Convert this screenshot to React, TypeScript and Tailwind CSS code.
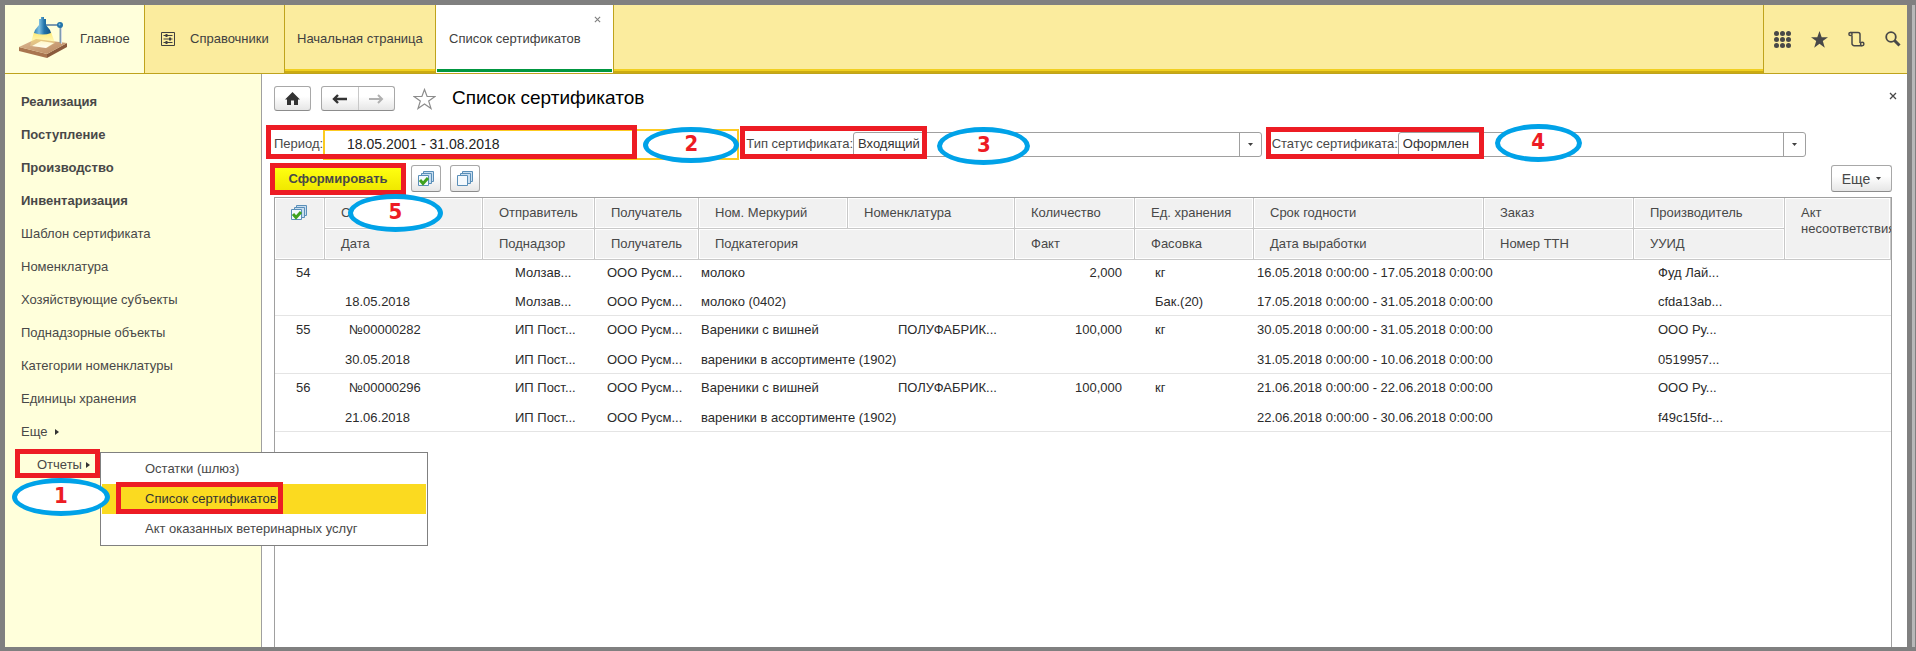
import type { ReactNode } from "react";

type Line = { no?: string; doc?: string; sender: string; receiver: string; item: string; goods?: string; qty?: string; unit?: string; dates: string; maker: string };

const sections = ["Реализация", "Поступление", "Производство", "Инвентаризация"];

const links = [
  "Шаблон сертификата",
  "Номенклатура",
  "Хозяйствующие субъекты",
  "Поднадзорные объекты",
  "Категории номенклатуры",
  "Единицы хранения",
];

const records: [Line, Line][] = [
  [
    { no: "54", sender: "Молзав...", receiver: "ООО Русм...", item: "молоко", qty: "2,000", unit: "кг", dates: "16.05.2018 0:00:00 - 17.05.2018 0:00:00", maker: "Фуд Лай..." },
    { doc: "18.05.2018", sender: "Молзав...", receiver: "ООО Русм...", item: "молоко (0402)", unit: "Бак.(20)", dates: "17.05.2018 0:00:00 - 31.05.2018 0:00:00", maker: "cfda13ab..." },
  ],
  [
    { no: "55", doc: "№00000282", sender: "ИП Пост...", receiver: "ООО Русм...", item: "Вареники с вишней", goods: "ПОЛУФАБРИК...", qty: "100,000", unit: "кг", dates: "30.05.2018 0:00:00 - 31.05.2018 0:00:00", maker: "ООО Ру..." },
    { doc: "30.05.2018", sender: "ИП Пост...", receiver: "ООО Русм...", item: "вареники в ассортименте (1902)", dates: "31.05.2018 0:00:00 - 10.06.2018 0:00:00", maker: "0519957..." },
  ],
  [
    { no: "56", doc: "№00000296", sender: "ИП Пост...", receiver: "ООО Русм...", item: "Вареники с вишней", goods: "ПОЛУФАБРИК...", qty: "100,000", unit: "кг", dates: "21.06.2018 0:00:00 - 22.06.2018 0:00:00", maker: "ООО Ру..." },
    { doc: "21.06.2018", sender: "ИП Пост...", receiver: "ООО Русм...", item: "вареники в ассортименте (1902)", dates: "22.06.2018 0:00:00 - 30.06.2018 0:00:00", maker: "f49c15fd-..." },
  ],
];

/* Red frame drawn over a control */
function Frame({ className }: { className: string }) {
  return <span className={`pointer-events-none absolute z-20 border-[5px] border-[#ed1c24] ${className}`} />;
}

/* Numbered step bubble */
function Step({ n, className }: { n: number; className: string }) {
  return (
    <span
      className={`pointer-events-none absolute z-30 flex items-center justify-center rounded-[50%] border-[5px] border-[#00a2e8] bg-white pb-0.5 font-['DejaVu_Sans_Condensed','DejaVu_Sans',sans-serif] text-[22px] leading-none font-bold text-[#ed1c24] ${className}`}
    >
      {n}
    </span>
  );
}

function LampLogo() {
  return (
    <svg width="50" height="50" viewBox="0 0 50 50" aria-hidden="true">
      <defs>
        <linearGradient id="beam" x1="0" y1="0" x2="0" y2="1">
          <stop offset="0" stopColor="#ffdf3a" />
          <stop offset="1" stopColor="#fff6b0" stopOpacity="0.3" />
        </linearGradient>
        <linearGradient id="shade" x1="0" y1="0" x2="1" y2="0">
          <stop offset="0" stopColor="#2f80b2" />
          <stop offset="0.3" stopColor="#7fc0e2" />
          <stop offset="0.6" stopColor="#2374aa" />
          <stop offset="1" stopColor="#155484" />
        </linearGradient>
        <linearGradient id="board" x1="0" y1="0" x2="1" y2="1">
          <stop offset="0" stopColor="#dcb892" />
          <stop offset="1" stopColor="#b98860" />
        </linearGradient>
      </defs>
      <path d="M29 40L49 29v4L29 44z" fill="#8a5a3c" />
      <path d="M1 33l28 7v4L1 37z" fill="#a9754f" />
      <path d="M1 33l17-8 31 4-20 11z" fill="url(#board)" />
      <path d="M14 32l9-5 13 2-8 5z" fill="#fff" />
      <path d="M16 18h17l4 11-8 5-17-2z" fill="url(#beam)" opacity="0.7" />
      <path d="M28 11h12M42.500 13v16" stroke="#7d9ab0" strokeWidth="2" fill="none" />
      <path d="M43.500 14v16" stroke="#d5dbe0" />
      <circle cx="42" cy="11" r="3" fill="#2374aa" />
      <circle cx="41.500" cy="10.500" r="1" fill="#7fc0e2" />
      <path d="M23 3h3v2h2v6l4 5 1 3q-8 3-17 0l1-3 4-5V5h2z" fill="url(#shade)" />
    </svg>
  );
}

function StackIcon({ checked }: { checked?: boolean }) {
  return (
    <svg width="16" height="16" viewBox="0 0 16 16" fill="#c9def0" stroke="#5a8fb8" aria-hidden="true">
      <path d="M5.500.5h10v10h-10z" />
      <path d="M3.500 2.500h10v10h-10z" />
      <path d="M.5 4.500h10v10H.5z" fill="#f4f9fd" />
      {checked && <path d="M2 9l3 3.500L10 7" fill="none" stroke="#3fa21f" strokeWidth="3" />}
    </svg>
  );
}

function Caret() {
  return (
    <svg width="5" height="3" viewBox="0 0 5 3" aria-hidden="true">
      <path d="M0 0h5L2.500 3z" fill="#404040" />
    </svg>
  );
}

function RightCaret() {
  return (
    <svg width="4" height="6" viewBox="0 0 4 6" aria-hidden="true">
      <path d="M0 0l4 3-4 3z" fill="#333" />
    </svg>
  );
}

function CloseIcon({ size, color }: { size: number; color: string }) {
  return (
    <svg width={size} height={size} viewBox="0 0 8 8" stroke={color} strokeWidth="1.300" aria-hidden="true">
      <path d="M1 1l6 6M7 1l-6 6" />
    </svg>
  );
}

const buttonLook = "flex items-center justify-center rounded-[3px] border border-[#a8a8a8] border-b-[#8c8c8c] bg-linear-to-b from-white from-40% to-[#e6e6e6]";

function TopBar() {
  const goldEdge = "border-b-2 border-[#cbab12] shadow-[inset_0_-2px_0_0_#f0cf20]";
  return (
    <header className="flex h-[69px] shrink-0 border-b border-[#bfa31c] bg-[#fbec9e] text-[13px] text-[#404040]">
      <a href="#" className="flex w-[140px] items-center border-r border-[#bfa31c] bg-[#ffffdb] pl-[13px]">
        <LampLogo />
        <span className="ml-3">Главное</span>
      </a>
      <a href="#" className="flex w-[140px] items-center border-r border-[#bfa31c] pl-4">
        <svg width="14" height="14" viewBox="0 0 14 14" fill="none" stroke="#404040" aria-hidden="true">
          <path d="M.5.5h13v13H.5z" />
          <path d="M2.500 3.500h9M2.500 7h9M2.500 10.500h9" />
          <path d="M5.500 2v3M9 5.500v3M5.500 9v3" strokeWidth="2" />
        </svg>
        <span className="ml-[15px]">Справочники</span>
      </a>
      <div className="border-r border-[#bfa31c]">
        <a href="#" className={`flex h-full w-[150px] items-center pt-0.5 pl-3 ${goldEdge}`}>
          Начальная страница
        </a>
      </div>
      <div className="relative border-r border-[#bfa31c] bg-white px-px pb-px">
        <a href="#" className="flex h-full w-[175px] items-center border-b-[3px] border-[#009640] pt-1 pl-3">
          Список сертификатов
        </a>
        <button type="button" aria-label="Закрыть вкладку" className="absolute top-[11px] right-3">
          <CloseIcon size={7} color="#808080" />
        </button>
      </div>
      <div className={`flex-1 ${goldEdge}`} />
      <div className="flex w-[144px] items-center justify-between border-l border-[#bfa31c] pr-1.5 pl-2.5">
        <button type="button" aria-label="Меню">
          <svg width="17" height="17" viewBox="0 0 17 17" fill="#484848">
            {[2.5, 8.5, 14.5].map((y) => [2.5, 8.5, 14.5].map((x) => <circle key={`${x}-${y}`} cx={x} cy={y} r="2.500" />))}
          </svg>
        </button>
        <button type="button" aria-label="Избранное">
          <svg width="17" height="17" viewBox="0 0 17 17" fill="#484848">
            <path d="M8.500 0l2.200 6.200H17l-5.200 3.900 2 6.600-5.300-4-5.300 4 2-6.600L0 6.200h6.300z" />
          </svg>
        </button>
        <button type="button" aria-label="История">
          <svg width="17" height="17" viewBox="0 0 17 17" fill="none" stroke="#484848" strokeWidth="1.500">
            <path d="M4 4.500V12.500a2.200 2.200 0 0 0 2.200 2.200H14M2.500 1.500h7.500a2 2 0 0 1 2 2V12" />
            <circle cx="2.500" cy="3" r="1.600" />
            <circle cx="14.200" cy="13" r="1.700" />
          </svg>
        </button>
        <button type="button" aria-label="Поиск">
          <svg width="16" height="16" viewBox="0 0 16 16" fill="none" stroke="#484848">
            <circle cx="6" cy="6" r="4.800" strokeWidth="1.800" />
            <path d="M9.500 9.500l5 5" strokeWidth="3" />
          </svg>
        </button>
      </div>
    </header>
  );
}

function Sidebar() {
  const item = "flex h-[33px] items-center";
  return (
    <nav className="relative w-[257px] shrink-0 border-r border-[#a0a0a0] bg-[#ffffdb] pt-[11px] pl-4 text-[13px] text-[#484848]">
      {sections.map((s) => (
        <a key={s} href="#" className={`${item} font-bold`}>{s}</a>
      ))}
      {links.map((l) => (
        <a key={l} href="#" className={item}>{l}</a>
      ))}
      <button type="button" className={`${item} gap-2`}>Еще <RightCaret /></button>
      <div className="relative">
        <button type="button" className={`${item} gap-1 pl-4`}>Отчеты <RightCaret /></button>
        <Frame className="-left-1.5 top-px h-[29px] w-[85px]" />
        <div className="absolute top-1 left-[79px] z-10 w-[328px] border border-[#808080] bg-white p-px">
          <a href="#" className="flex h-[30px] items-center pl-[43px]">Остатки (шлюз)</a>
          <a href="#" className="relative flex h-[30px] items-center bg-[#fbda20] pl-[43px] text-[#333]">
            Список сертификатов
            <Frame className="-top-0.5 left-3.5 h-8 w-[167px]" />
          </a>
          <a href="#" className="flex h-[30px] items-center pl-[43px]">Акт оказанных ветеринарных услуг</a>
        </div>
        <Step n={1} className="top-[30px] -left-[9px] h-[38px] w-[98px]" />
      </div>
    </nav>
  );
}

function SelectField({ id, label, value, children }: { id: string; label: string; value: string; children: ReactNode }) {
  return (
    <>
      <label htmlFor={id} className="shrink-0 text-[13px] text-[#484848]">{label}</label>
      <div className="relative flex h-[25px] min-w-0 flex-1 rounded-[3px] border border-[#a0a0a0]">
        <select id={id} className="min-w-0 flex-1 appearance-none pl-1 text-[13px] text-[#333]">
          <option>{value}</option>
        </select>
        <span className="pointer-events-none flex w-[22px] items-center justify-center border-l border-[#a0a0a0]">
          <Caret />
        </span>
      </div>
      {children}
    </>
  );
}

function Filters() {
  return (
    <div className="mt-[17px] mr-[86px] flex h-8 items-center gap-[7px]">
      <div className="relative flex min-w-0 flex-[465] items-center">
        <label htmlFor="period" className="w-[49px] shrink-0 text-[13px] text-[#484848]">Период:</label>
        <input
          id="period"
          defaultValue="18.05.2001 - 31.08.2018"
          className="h-[31px] min-w-0 flex-1 border-2 border-[#fccb21] pl-[22px] text-sm text-[#222]"
        />
        <Frame className="-top-1 -left-2 h-[34px] w-[371px]" />
        <Step n={2} className="-top-0.5 right-0 h-9 w-[96px]" />
      </div>
      <div className="relative flex min-w-0 flex-[515] items-center">
        <SelectField id="kind" label="Тип сертификата:" value="Входящий">
          <Frame className="-top-1.5 -left-1.5 h-[33px] w-[187px]" />
          <Step n={3} className="-top-[5px] left-[191px] h-[38px] w-[93px]" />
        </SelectField>
      </div>
      <div className="relative ml-[3px] flex min-w-0 flex-[534] items-center">
        <SelectField id="status" label="Статус сертификата:" value="Оформлен">
          <Frame className="-top-[5px] -left-1.5 h-8 w-[218px]" />
          <Step n={4} className="-top-2 left-[223px] h-[38px] w-[87px]" />
        </SelectField>
      </div>
    </div>
  );
}

function Th({ children, ...rest }: { children: ReactNode; colSpan?: number; rowSpan?: number }) {
  return (
    <th
      {...rest}
      className="h-[31px] border-r border-b border-[#c8c8c8] bg-[#f1f1f1] pl-4 text-left font-normal whitespace-nowrap text-[#484848] shadow-[inset_0_0_0_1px_#fff]"
    >
      {children}
    </th>
  );
}

function Certificates() {
  return (
    <div className="mt-[5px] flex-1 overflow-hidden border border-b-0 border-[#a0a0a0]">
      <table className="w-full table-fixed border-separate border-spacing-0 text-[13px] leading-4 text-[#2b2b2b]">
        <colgroup>
          <col className="w-[50px]" />
          <col className="w-[158px]" />
          <col className="w-[112px]" />
          <col className="w-[104px]" />
          <col className="w-[149px]" />
          <col className="w-[167px]" />
          <col className="w-[120px]" />
          <col className="w-[119px]" />
          <col className="w-[230px]" />
          <col className="w-[150px]" />
          <col className="w-[151px]" />
          <col />
        </colgroup>
        <thead>
          <tr>
            <Th rowSpan={2}><div className="h-12"><StackIcon checked /></div></Th>
            <Th>С</Th>
            <Th>Отправитель</Th>
            <Th>Получатель</Th>
            <Th>Ном. Меркурий</Th>
            <Th>Номенклатура</Th>
            <Th>Количество</Th>
            <Th>Ед. хранения</Th>
            <Th>Срок годности</Th>
            <Th>Заказ</Th>
            <Th>Производитель</Th>
            <Th rowSpan={2}><div className="h-12">Акт<br />несоответствия</div></Th>
          </tr>
          <tr>
            <Th>Дата</Th>
            <Th>Поднадзор</Th>
            <Th>Получатель</Th>
            <Th colSpan={2}>Подкатегория</Th>
            <Th>Факт</Th>
            <Th>Фасовка</Th>
            <Th>Дата выработки</Th>
            <Th>Номер ТТН</Th>
            <Th>УУИД</Th>
          </tr>
        </thead>
        {records.map(([top, bottom], i) => (
          <tbody key={i} className="whitespace-nowrap">
            <tr className={i === 0 ? "h-[26px]" : "h-7"}>
              <td className="pl-[21px]">{top.no}</td>
              <td className="pl-6">{top.doc}</td>
              <td className="pl-8">{top.sender}</td>
              <td className="pl-3">{top.receiver}</td>
              <td className="pl-0.5">{top.item}</td>
              <td className="pl-[50px]">{top.goods}</td>
              <td className="pr-[13px] text-right">{top.qty}</td>
              <td className="pl-5">{top.unit}</td>
              <td className="pl-[3px]">{top.dates}</td>
              <td />
              <td className="pl-6">{top.maker}</td>
              <td />
            </tr>
            <tr className="h-[30px] *:border-b *:border-[#e4e4e4] *:pt-0.5">
              <td />
              <td className="pl-5">{bottom.doc}</td>
              <td className="pl-8">{bottom.sender}</td>
              <td className="pl-3">{bottom.receiver}</td>
              <td className="pl-0.5" colSpan={2}>{bottom.item}</td>
              <td />
              <td className="pl-5">{bottom.unit}</td>
              <td className="pl-[3px]">{bottom.dates}</td>
              <td />
              <td className="pl-6">{bottom.maker}</td>
              <td />
            </tr>
          </tbody>
        ))}
      </table>
    </div>
  );
}

export default function App() {
  return (
    <div className="flex h-screen bg-[#808080] pt-[5px] pb-1 pl-[5px] font-['Liberation_Sans',sans-serif]">
      <div className="flex min-w-0 flex-1 flex-col bg-white">
        <TopBar />
        <div className="flex min-h-0 flex-1">
          <Sidebar />
          <main className="flex min-w-0 flex-1 flex-col pr-[15px] pl-3">
            <div className="mt-3 flex h-[25px] items-center">
              <button type="button" aria-label="Домой" className={`h-[25px] w-[37px] ${buttonLook}`}>
                <svg width="15" height="13" viewBox="0 0 15 13" fill="#333">
                  <path d="M7.500 0L15 7.500h-2V13H9V8.500H6V13H2V7.500H0z" />
                </svg>
              </button>
              <div className={`ml-2.5 h-[25px] w-[74px] ${buttonLook}`}>
                <button type="button" aria-label="Назад" className="flex h-full flex-1 items-center justify-center border-r border-[#c8c8c8]">
                  <svg width="15" height="10" viewBox="0 0 15 10" fill="none" stroke="#333" strokeWidth="2.400">
                    <path d="M15 5H2M6 1L2 5l4 4" />
                  </svg>
                </button>
                <button type="button" aria-label="Вперед" className="flex h-full flex-1 items-center justify-center">
                  <svg width="15" height="10" viewBox="0 0 15 10" fill="none" stroke="#b0b0b0" strokeWidth="2">
                    <path d="M0 5h13M9 1l4 4-4 4" />
                  </svg>
                </button>
              </div>
              <button type="button" aria-label="В избранное" className="ml-[18px]">
                <svg width="23" height="22" viewBox="0 0 23 22" fill="#fff" stroke="#8c8c8c" strokeWidth="1.200">
                  <path d="M11.500 1.500l2.600 7H22l-6.300 4.600 2.300 7.400-6.500-4.500L5 20.500l2.300-7.400L1 8.500h7.900z" />
                </svg>
              </button>
              <h1 className="ml-4 text-[19px] text-black">Список сертификатов</h1>
              <button type="button" aria-label="Закрыть" className="mr-[-5px] ml-auto self-start pt-1.5">
                <CloseIcon size={8} color="#484848" />
              </button>
            </div>
            <Filters />
            <div className="relative mt-[5px] flex h-[27px] items-center">
              <button type="button" className="ml-px h-[22px] w-[126px] bg-linear-to-b from-[#ffff10] to-[#f0e800] text-[13px] font-bold text-[#484848]">
                Сформировать
              </button>
              <Frame className="-top-0.5 -left-1 h-8 w-[136px]" />
              <Step n={5} className="top-[29px] left-[74px] h-[38px] w-[95px]" />
              <button type="button" aria-label="Отметить все" className={`ml-2.5 h-[27px] w-[30px] ${buttonLook}`}>
                <StackIcon checked />
              </button>
              <button type="button" aria-label="Снять отметки" className={`ml-[9px] h-[27px] w-[30px] ${buttonLook}`}>
                <StackIcon />
              </button>
              <button type="button" className={`ml-auto h-[27px] w-[61px] gap-1.5 text-sm text-[#484848] ${buttonLook}`}>
                Еще <Caret />
              </button>
            </div>
            <Certificates />
          </main>
        </div>
      </div>
      <div className="ml-[5px] w-1 border-r border-[#808080] bg-[#b8b8b8]" />
    </div>
  );
}
